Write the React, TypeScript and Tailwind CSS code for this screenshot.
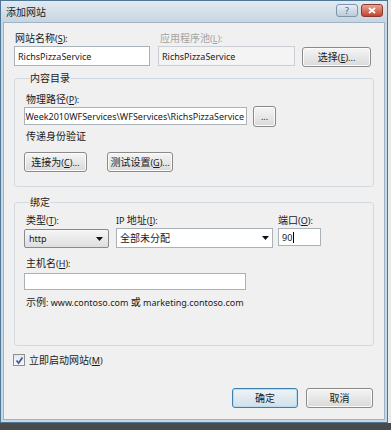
import React from "react";

const font = { fontFamily: '"Noto Sans", "Noto Sans CJK SC", sans-serif' };

function C({ children }: { children: React.ReactNode }) {
  return <span className="text-[10px]">{children}</span>;
}

function Btn({ children, className = "", primary = false }: { children: React.ReactNode; className?: string; primary?: boolean }) {
  return (
    <div
      className={
        "flex items-center justify-center whitespace-nowrap rounded-[3px] border text-[9px] leading-none text-[#1a1a1a] " +
        (primary
          ? "border-[#3c7fb1] bg-linear-to-b from-[#eef4f8] to-[#d3dfe8] shadow-[inset_0_0_0_1px_#b9dcf2] "
          : "border-[#8a8a8a] bg-linear-to-b from-[#f5f5f5] to-[#dadada] shadow-[inset_0_0_0_1px_#fbfbfb] ") +
        className
      }
    >
      {children}
    </div>
  );
}

function Label({ children, className = "" }: { children: React.ReactNode; className?: string }) {
  return <div className={"h-[14px] text-[9px] leading-[14px] whitespace-nowrap " + className}>{children}</div>;
}

function Arrow() {
  return (
    <svg width="7" height="4" viewBox="0 0 7 4" className="shrink-0">
      <path d="M0 0 H7 L3.5 4 Z" fill="#111" />
    </svg>
  );
}

export default function App() {
  return (
    <div className="w-[391px] h-[430px] bg-[#e9e9e9] overflow-hidden flex flex-col text-[#1a1a1a]" style={font}>
      <div className="w-[388px] h-[423px] border border-[#4f7796] bg-[#c8d7e4] flex flex-col">
        {/* title bar */}
        <div className="h-[21px] flex items-center justify-between pl-[5px] pr-[4px] bg-linear-to-b from-[#e2eaf1] to-[#c6d5e2]">
          <div className="text-[10px] leading-none text-[#1a1a1a]">添加网站</div>
          <div className="flex gap-[3px] items-start mt-[-3px]">
            <div className="w-[22px] h-[13px] rounded-[3px] border border-[#7f95ab] bg-linear-to-b from-[#e6eef5] to-[#bccbd9] flex items-center justify-center text-[9px] leading-none text-[#4a6178]">
              ?
            </div>
            <div className="w-[22px] h-[13px] rounded-[3px] border border-[#8b3a2e] bg-linear-to-b from-[#e6a494] to-[#c4412d] flex items-center justify-center">
              <svg width="8" height="7" viewBox="0 0 8 7">
                <path d="M1 1 L7 6 M7 1 L1 6" stroke="#fff" strokeWidth="1.8" />
              </svg>
            </div>
          </div>
        </div>
        {/* content */}
        <div className="flex-1 mx-[2px] mb-[2px] border border-[#9fb3c5] bg-[#f0f0f0] flex flex-col pt-[8px] pl-[10px] pr-[11px]">
          {/* row 1 */}
          <div className="flex items-end">
            <div className="w-[136px] flex flex-col">
              <Label className="ml-[1px]">
                <C>网站名称</C>(<u>S</u>):
              </Label>
              <div className="mt-[1px] h-[20px] border border-[#a9b1b9] bg-white flex items-center pl-[3px] text-[9px] leading-none">
                RichsPizzaService
              </div>
            </div>
            <div className="w-[137px] ml-[8px] flex flex-col">
              <Label className="ml-[2px] text-[#a3a3a3]">
                <C>应用程序池</C>(<u>L</u>):
              </Label>
              <div className="mt-[1px] h-[20px] border border-[#c9cfd5] bg-[#f4f4f4] flex items-center pl-[3px] text-[9px] leading-none">
                RichsPizzaService
              </div>
            </div>
            <Btn className="w-[69px] h-[20px] ml-[7px] mb-[-1px]">
              <C>选择</C>(<u>E</u>)...
            </Btn>
          </div>

          {/* group 1 */}
          <fieldset className="mt-[5px] w-[360px] border border-[#d3dbe2] rounded-[3px] pl-[9px] pb-[14px]">
            <legend className="ml-[6px] h-[14px] text-[10px] leading-[14px] px-0">内容目录</legend>
            <Label className="ml-[2px] mt-[7px]">
              <C>物理路径</C>(<u>P</u>):
            </Label>
            <div className="flex items-start">
              <div className="mt-[1px] w-[223px] h-[18px] border border-[#a9b1b9] bg-white flex justify-end items-center overflow-hidden text-[9px] leading-none pr-[2px]">
                <span className="whitespace-nowrap">\Week2010WFServices\WFServices\RichsPizzaService</span>
              </div>
              <Btn className="ml-[6px] w-[23px] h-[21px]">...</Btn>
            </div>
            <Label className="ml-[2px] mt-[2px]">
              <C>传递身份验证</C>
            </Label>
            <div className="flex mt-[9px]">
              <Btn className="w-[63px] h-[20px]">
                <C>连接为</C>(<u>C</u>)...
              </Btn>
              <Btn className="ml-[20px] w-[66px] h-[20px]">
                <C>测试设置</C>(<u>G</u>)...
              </Btn>
            </div>
          </fieldset>

          {/* group 2 */}
          <fieldset className="mt-[8px] w-[360px] border border-[#d3dbe2] rounded-[3px] pl-[9px] pb-[36px]">
            <legend className="ml-[6px] h-[14px] text-[10px] leading-[14px] px-0">绑定</legend>
            <div className="flex mt-[4px] items-start">
              <div className="w-[85px] flex flex-col">
                <Label className="ml-[2px]">
                  <C>类型</C>(<u>T</u>):
                </Label>
                <div className="mt-[2px] h-[19px] rounded-[2px] border border-[#8a8a8a] bg-linear-to-b from-[#f6f6f6] to-[#dedede] flex items-center justify-between pl-[4px] pr-[5px] text-[9px] leading-none">
                  <span>http</span>
                  <Arrow />
                </div>
              </div>
              <div className="w-[157px] ml-[7px] flex flex-col">
                <Label>
                  IP <C>地址</C>(<u>I</u>):
                </Label>
                <div className="mt-[1px] h-[20px] border border-[#a9b1b9] bg-white flex items-center justify-between pl-[3px] pr-[3px] text-[10px] leading-none">
                  <span>全部未分配</span>
                  <Arrow />
                </div>
              </div>
              <div className="w-[43px] ml-[5px] flex flex-col">
                <Label>
                  <C>端口</C>(<u>O</u>):
                </Label>
                <div className="mt-[1px] h-[18px] border border-[#a9b1b9] bg-white flex items-center pl-[3px] text-[9px] leading-none">
                  <span>90</span>
                  <span className="w-[1px] h-[11px] bg-black ml-[1px]" />
                </div>
              </div>
            </div>
            <Label className="ml-[2px] mt-[8px]">
              <C>主机名</C>(<u>H</u>):
            </Label>
            <div className="mt-[3px] w-[222px] h-[17px] border border-[#a9b1b9] bg-white" />
            <Label className="ml-[2px] mt-[5px]">
              <C>示例</C>: www.contoso.com <C>或</C> marketing.contoso.com
            </Label>
          </fieldset>

          {/* checkbox */}
          <div className="flex items-center mt-[7px] ml-[-1px]">
            <div className="w-[12px] h-[12px] border border-[#8e8f8f] bg-linear-to-b from-[#e4e8ee] to-[#f6f7f9] flex items-center justify-center">
              <svg width="9" height="9" viewBox="0 0 9 9">
                <path d="M1.5 4.5 L3.6 7 L7.5 1.5" stroke="#3d5da0" strokeWidth="1.7" fill="none" />
              </svg>
            </div>
            <Label className="ml-[4px]">
              <C>立即启动网站</C>(<u>M</u>)
            </Label>
          </div>

          {/* buttons */}
          <div className="flex justify-end mt-[21px] gap-[8px]">
            <Btn primary className="w-[66px] h-[20px]">
              <C>确定</C>
            </Btn>
            <Btn className="w-[67px] h-[20px]">
              <C>取消</C>
            </Btn>
          </div>
        </div>
      </div>
      <div className="flex-1 bg-[#4a4a4a]" />
    </div>
  );
}
